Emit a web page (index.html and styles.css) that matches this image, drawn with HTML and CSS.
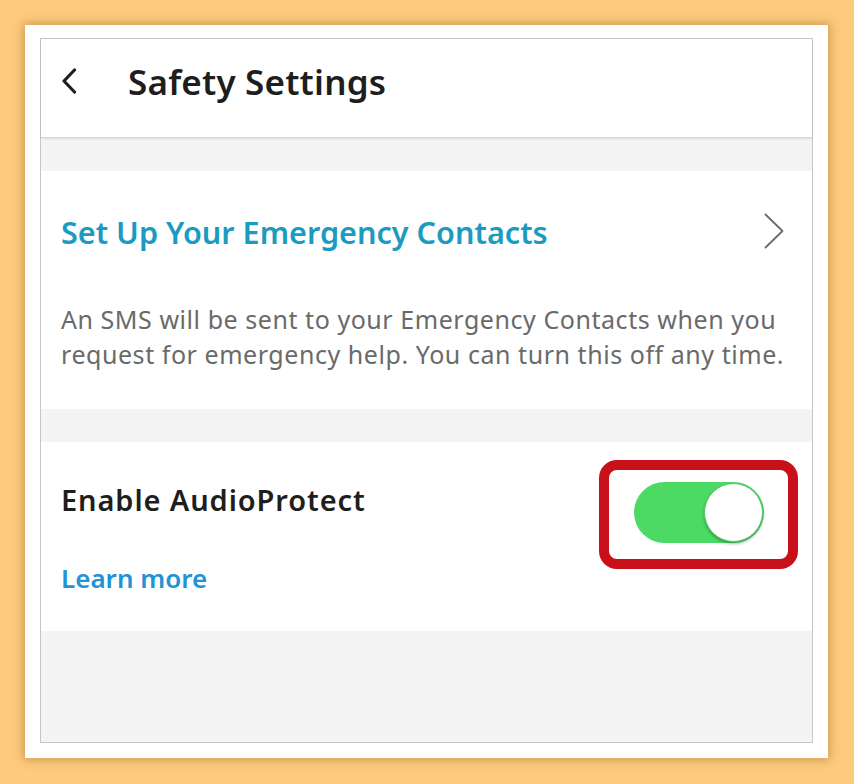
FILE: index.html
```html
<!DOCTYPE html>
<html lang="en">
<head>
<meta charset="utf-8">
<title>Safety Settings</title>
<link rel="stylesheet" href="styles.css">
</head>
<body>
<div class="frame">
  <div class="screen">
    <header class="header">
      <svg class="back" width="16" height="26" viewBox="0 0 16 26" aria-hidden="true">
        <path d="M13.5 2 L3 13 L13.5 24" fill="none" stroke="#1e1e1e" stroke-width="3.2" stroke-linecap="round" stroke-linejoin="round"/>
      </svg>
      <h1 class="title">Safety Settings</h1>
    </header>
    <div class="band band-top"></div>
    <section class="section contacts">
      <div class="contacts-row">
        <span class="contacts-link">Set Up Your Emergency Contacts</span>
        <svg class="chev" width="22" height="36" viewBox="0 0 22 36" aria-hidden="true">
          <path d="M2.5 1.5 L19.5 18 L2.5 34.5" fill="none" stroke="#6b6b6b" stroke-width="1.8" stroke-linecap="round" stroke-linejoin="round"/>
        </svg>
      </div>
      <p class="desc">An SMS will be sent to your Emergency Contacts when you request for emergency help. You can turn this off any time.</p>
    </section>
    <div class="band band-mid"></div>
    <section class="section audio">
      <div class="audio-text">
        <div class="audio-title">Enable AudioProtect</div>
        <div class="learn">Learn more</div>
      </div>
      <div class="toggle"><div class="knob"></div></div>
      <div class="highlight"></div>
    </section>
    <div class="rest"></div>
  </div>
</div>
</body>
</html>
```

FILE: styles.css
```css
* { box-sizing: border-box; }
html, body { margin: 0; padding: 0; }
body {
  width: 854px;
  height: 784px;
  background: #fdca7e;
  padding: 25px 26px 26px 25px;
  font-family: "Noto Sans", "Open Sans", sans-serif;
  overflow: hidden;
}
.frame {
  width: 803px;
  height: 733px;
  background: #ffffff;
  padding: 13px 15px 15px 15px;
  box-shadow: 0 0 9px 2px rgba(150, 100, 30, 0.45);
}
.screen {
  width: 773px;
  height: 705px;
  border: 1px solid #c6c6c6;
  display: flex;
  flex-direction: column;
  background: #f4f4f4;
}
.header {
  height: 99px;
  background: #ffffff;
  display: flex;
  align-items: flex-start;
  padding: 29px 0 0 20px;
  border-bottom: 1px solid #d8d8d8;
  box-shadow: 0 1px 2px rgba(0,0,0,0.1);
  position: relative;
  z-index: 1;
}
.back { display: block; margin-top: 0; }
.title {
  margin: -4px 0 0 51px;
  font-size: 35px;
  line-height: 35px;
  font-weight: 600;
  color: #1e1e1e;
  letter-spacing: 0.2px;
}
.band { background: #f4f4f4; }
.band-top { height: 33px; }
.band-mid { height: 33px; }
.section { background: #ffffff; }
.contacts { padding: 44px 27px 37px 20px; }
.contacts-row {
  display: flex;
  align-items: center;
  justify-content: space-between;
}
.contacts-link {
  font-size: 30.6px;
  line-height: 30px;
  font-weight: 600;
  color: #1b9bc0;
}
.chev { display: block; margin-top: -2px; }
.desc {
  margin: 53px 0 0 0;
  font-size: 25px;
  line-height: 35px;
  letter-spacing: 0.55px;
  color: #6a6a6a;
}
.audio {
  position: relative;
  display: flex;
  justify-content: space-between;
  align-items: flex-start;
  padding: 44px 48px 40px 20px;
}
.audio-title {
  font-size: 29px;
  line-height: 28px;
  font-weight: 600;
  letter-spacing: 0.9px;
  color: #1e1e1e;
}
.learn {
  margin-top: 51px;
  font-size: 26px;
  line-height: 26px;
  font-weight: 600;
  color: #2393d6;
}
.toggle {
  width: 130px;
  height: 61px;
  border-radius: 31px;
  background: #4cd964;
  margin-top: -4px;
  position: relative;
  display: flex;
  justify-content: flex-end;
  align-items: center;
  padding-right: 1px;
}
.knob {
  width: 59px;
  height: 59px;
  border-radius: 50%;
  background: #ffffff;
  border: 1px solid #58c46c;
  box-shadow: 0 2px 3px rgba(0, 60, 0, 0.35);
}
.highlight {
  position: absolute;
  left: 558px;
  top: 18px;
  width: 199px;
  height: 109px;
  border: 10px solid #c8101a;
  border-radius: 18px;
  pointer-events: none;
}
.rest { flex: 1; background: #f4f4f4; }
```
